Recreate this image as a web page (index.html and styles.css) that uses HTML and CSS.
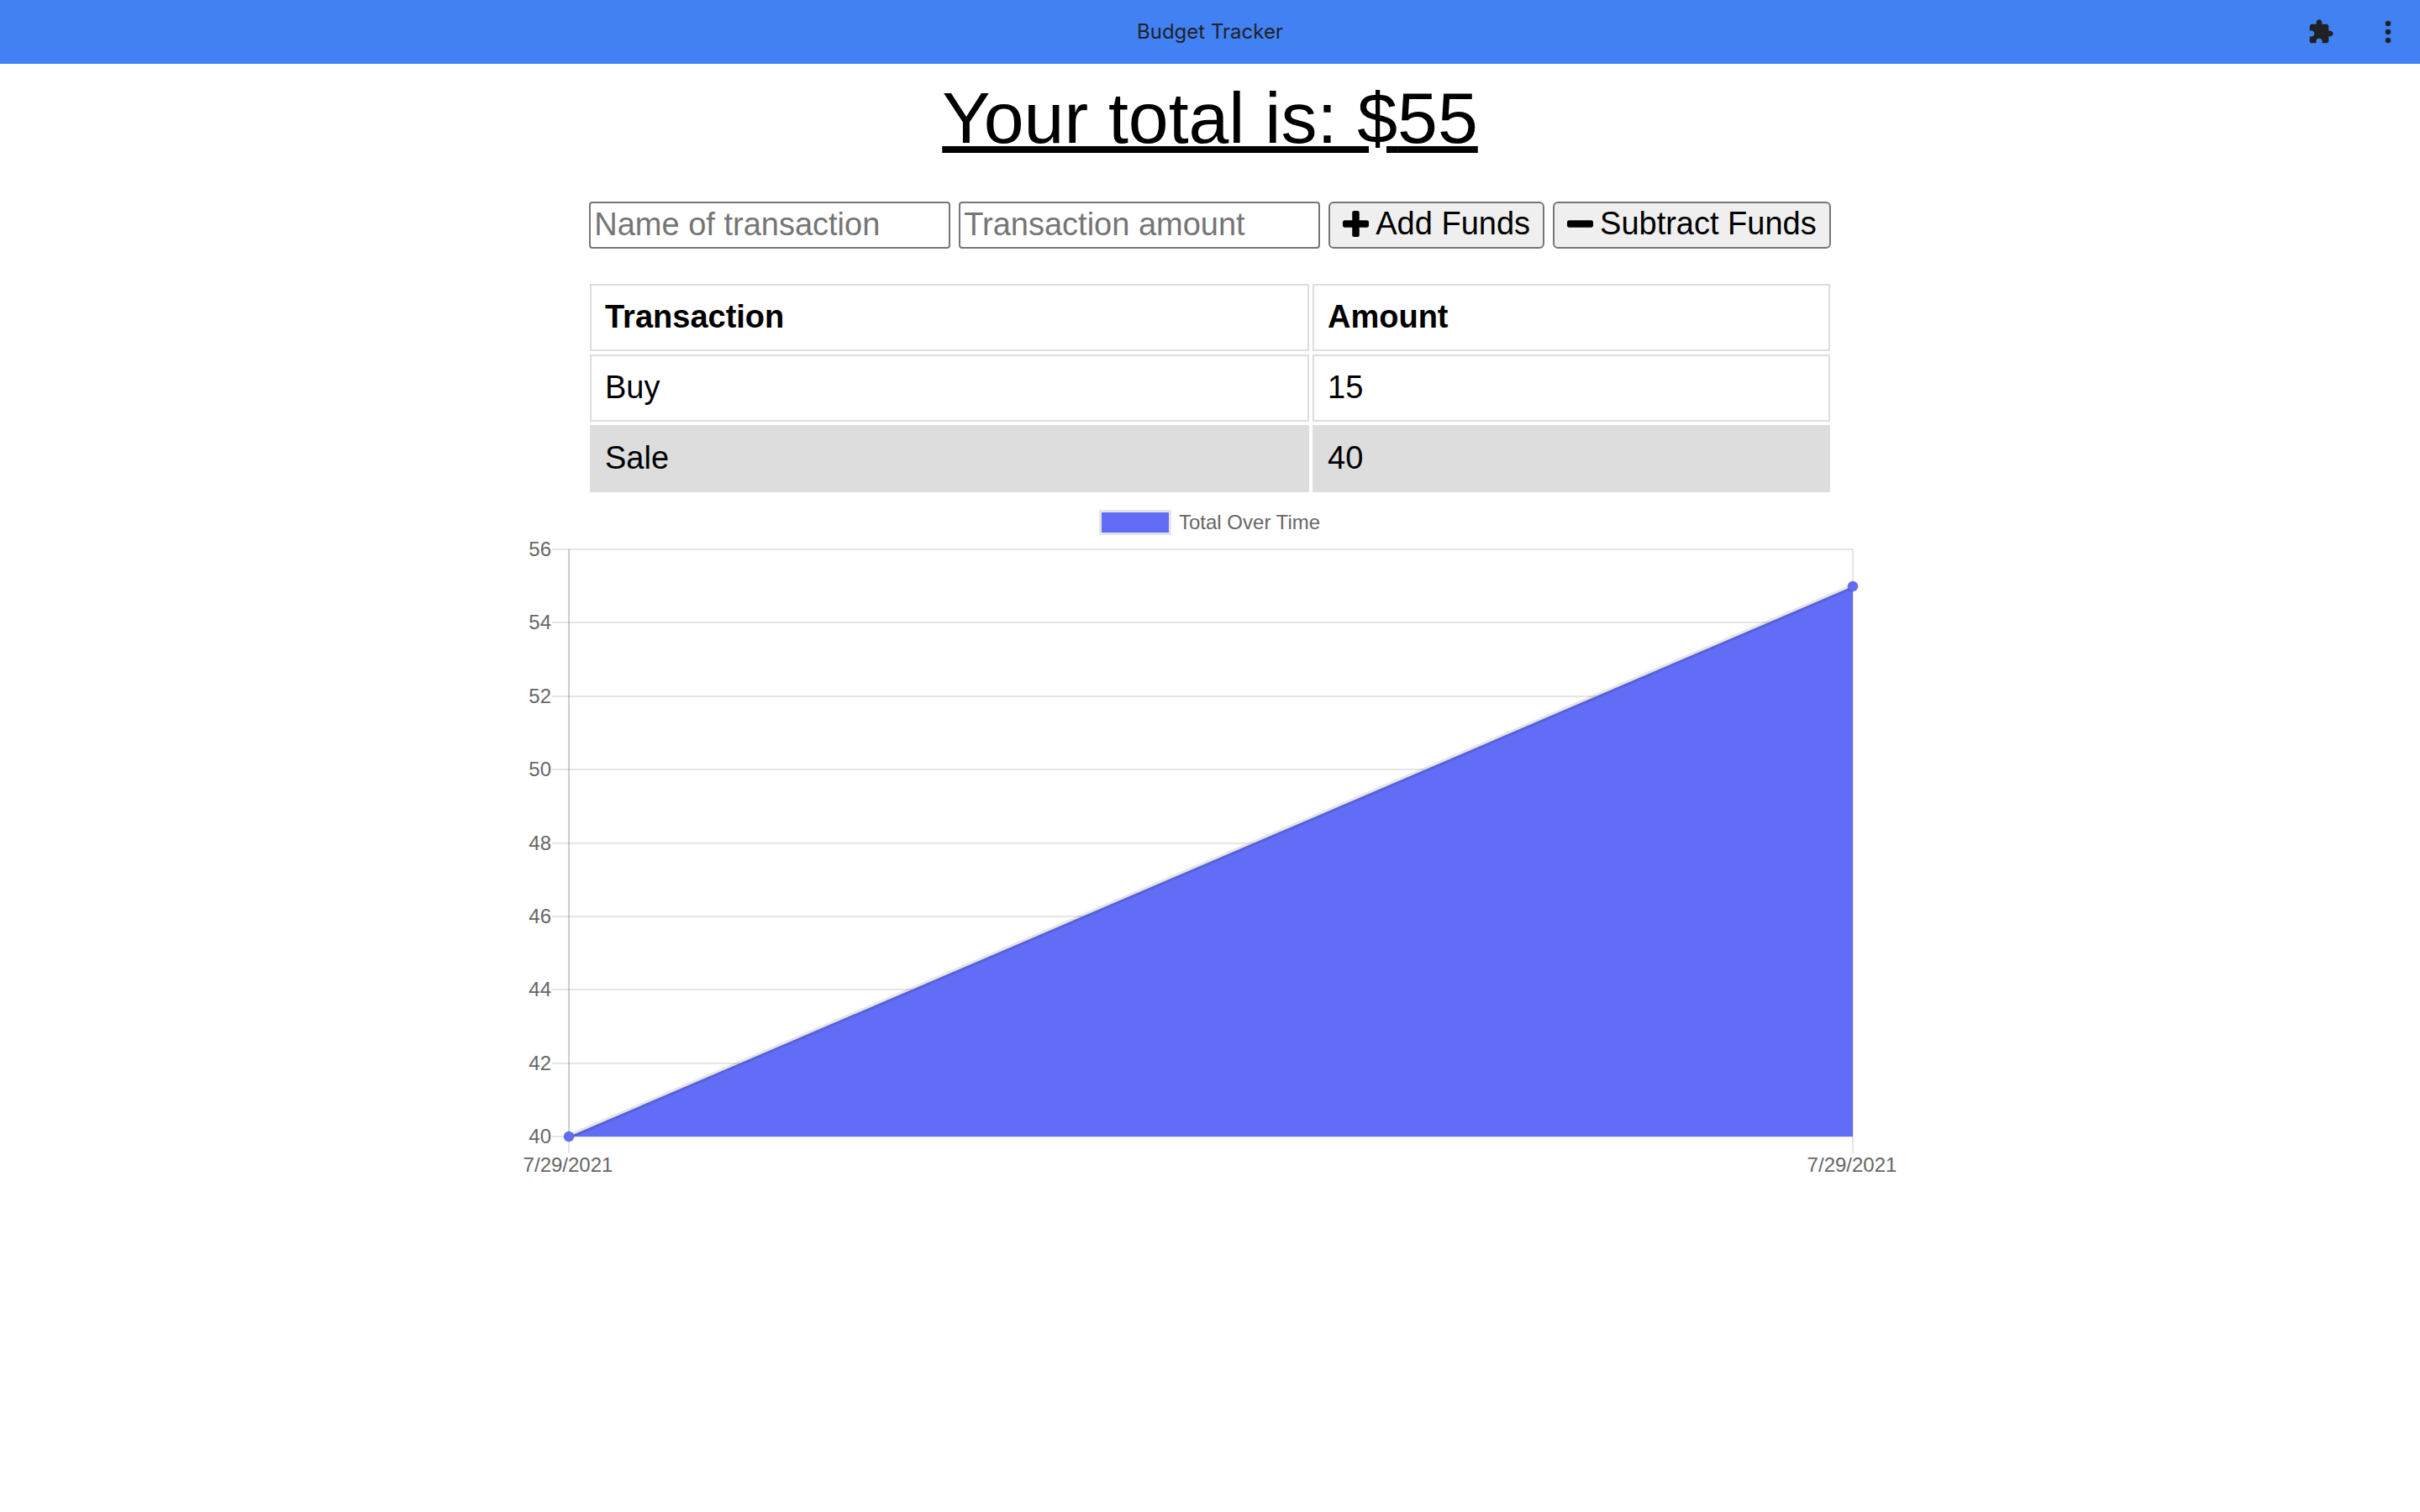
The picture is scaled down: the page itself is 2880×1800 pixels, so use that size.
FILE: index.html
```html
<!DOCTYPE html>
<html lang="en">
<head>
<meta charset="utf-8">
<title>Budget Tracker</title>
<link rel="stylesheet" href="styles.css">
</head>
<body>
<header class="titlebar">
  <div class="titlebar-name">Budget Tracker</div>
  <div class="titlebar-actions">
    <button class="icon-button" type="button" aria-label="Extensions">
      <svg class="icon-extensions" viewBox="0 0 24 24"><path d="M20.5 11H19V7c0-1.100-.9-2-2-2h-4V3.500C13 2.120 11.880 1 10.500 1S8 2.120 8 3.500V5H4c-1.100 0-1.990.9-1.990 2v3.800H3.500c1.490 0 2.700 1.210 2.700 2.700s-1.210 2.700-2.700 2.700H2V20c0 1.100.9 2 2 2h3.800v-1.500c0-1.490 1.210-2.700 2.700-2.700s2.700 1.210 2.700 2.700V22H17c1.100 0 2-.9 2-2v-4h1.500c1.380 0 2.500-1.120 2.500-2.500S21.880 11 20.500 11z"/></svg>
    </button>
    <button class="icon-button" type="button" aria-label="More options">
      <svg class="icon-more" viewBox="0 0 24 24"><circle cx="12" cy="6" r="2"/><circle cx="12" cy="12" r="2"/><circle cx="12" cy="18" r="2"/></svg>
    </button>
  </div>
</header>
<main class="wrapper">
  <h1 class="total">Your total is: $<span id="total">55</span></h1>
  <form class="form">
    <input class="field" type="text" id="t-name" aria-label="Name of transaction" placeholder="Name of transaction">
    <input class="field" type="text" inputmode="numeric" id="t-amount" aria-label="Transaction amount" placeholder="Transaction amount">
    <button class="fund-button" type="button" id="add-btn">
      <svg class="fund-icon" viewBox="192 128 1408 1408"><path d="M1600 736v192q0 40-28 68t-68 28h-416v416q0 40-28 68t-68 28h-192q-40 0-68-28t-28-68v-416h-416q-40 0-68-28t-28-68v-192q0-40 28-68t68-28h416v-416q0-40 28-68t68-28h192q40 0 68 28t28 68v416h416q40 0 68 28t28 68z"/></svg>
      Add Funds
    </button>
    <button class="fund-button" type="button" id="sub-btn">
      <svg class="fund-icon" viewBox="192 128 1408 1408"><path d="M1600 736v192q0 40-28 68t-68 28h-1216q-40 0-68-28t-28-68v-192q0-40 28-68t68-28h1216q40 0 68 28t28 68z"/></svg>
      Subtract Funds
    </button>
  </form>
  <table class="transactions">
    <thead>
      <tr><th class="col-name" scope="col">Transaction</th><th scope="col">Amount</th></tr>
    </thead>
    <tbody>
      <tr><td>Buy</td><td>15</td></tr>
      <tr><td>Sale</td><td>40</td></tr>
    </tbody>
  </table>
  <svg class="chart" viewBox="0 0 1640 820" role="img" aria-label="Total Over Time">
    <defs><clipPath id="area"><rect x="57" y="64" width="1528" height="702"/></clipPath></defs>
    <rect class="legend-border" x="688" y="17" width="86" height="30"/>
    <rect class="series" x="691" y="20" width="80" height="24"/>
    <text class="label" x="783" y="40">Total Over Time</text>
    <g class="grid">
      <path d="M37 64H1585M37 151H1585M37 239H1585M37 326H1585M37 414H1585M37 501H1585M37 588H1585M37 676H1585M37 763H1585"/>
      <path d="M57 64V783"/>
      <path d="M57 64V763"/>
      <path d="M1585 64V783"/>
    </g>
    <g class="label label-end">
      <text x="36" y="72">56</text>
      <text x="36" y="159">54</text>
      <text x="36" y="247">52</text>
      <text x="36" y="334">50</text>
      <text x="36" y="422">48</text>
      <text x="36" y="509">46</text>
      <text x="36" y="596">44</text>
      <text x="36" y="684">42</text>
      <text x="36" y="771">40</text>
    </g>
    <g class="label label-middle">
      <text x="56" y="805">7/29/2021</text>
      <text x="1584" y="805">7/29/2021</text>
    </g>
    <g clip-path="url(#area)">
      <path class="series" d="M57 763L1585 108V763z"/>
      <path class="series-line" d="M57 763L1585 108"/>
    </g>
    <circle class="point" cx="57" cy="763" r="6"/>
    <circle class="point" cx="1585" cy="108" r="6"/>
  </svg>
</main>
</body>
</html>
```
FILE: styles.css
```css
* {
  box-sizing: border-box;
}

body {
  margin: 0;
  background: #fff;
  color: #000;
  font-family: "Liberation Sans", Arial, sans-serif;
  font-size: 38px;
  line-height: 44px;
}

.titlebar {
  display: grid;
  grid-template-columns: 1fr auto 1fr;
  align-items: center;
  height: 76px;
  padding: 0 18px;
  background: #4281f4;
  color: #202124;
}

.titlebar-name {
  grid-column: 2;
  font-family: Inter, Roboto, sans-serif;
  font-size: 24px;
  line-height: 32px;
}

.titlebar-actions {
  display: flex;
  justify-content: flex-end;
  align-items: center;
  gap: 44px;
}

.icon-button {
  display: flex;
  padding: 0;
  border: 0;
  background: none;
  color: inherit;
}

.icon-button svg,
.fund-icon {
  fill: currentColor;
}

.icon-extensions {
  width: 32px;
  height: 32px;
}

.icon-more {
  width: 40px;
  height: 40px;
}

.wrapper {
  display: flex;
  flex-direction: column;
  align-items: center;
  max-width: 1640px;
  margin: 0 auto;
}

.total {
  margin: 14px 0 50px;
  font-size: 86px;
  font-weight: 400;
  line-height: 100px;
  text-decoration: underline;
  text-decoration-thickness: 8px;
  text-underline-offset: 4px;
}

.form {
  display: flex;
  flex-wrap: wrap;
  justify-content: center;
  gap: 10px;
}

.field {
  width: 430px;
  height: 56px;
  padding: 2px 4px 4px;
  border: 2px solid #767676;
  border-radius: 4px;
  background: #fff;
  font: inherit;
}

.field::placeholder {
  color: #757575;
  opacity: 1;
}

.fund-button {
  display: flex;
  align-items: center;
  gap: 8px;
  height: 56px;
  padding: 0 15px 4px;
  border: 2px solid #767676;
  border-radius: 6px;
  background: #efefef;
  color: #000;
  font: inherit;
}

.fund-icon {
  width: 31px;
  height: 31px;
}

.transactions {
  width: 1484px;
  max-width: 100%;
  margin-top: 38px;
  border-collapse: separate;
  border-spacing: 4px;
  text-align: left;
}

.transactions th,
.transactions td {
  padding: 15px 16px 17px;
  border: 2px solid #ddd;
}

.transactions .col-name {
  width: 856px;
}

.transactions tbody tr:nth-child(even) {
  background: #ddd;
}

.chart {
  display: block;
  width: 100%;
}

.legend-border {
  fill: #e5e5e5;
}

.series {
  fill: #616df6;
}

.series-line {
  stroke: #000;
  stroke-opacity: 0.1;
  stroke-width: 6;
}

.grid {
  fill: none;
  stroke: #000;
  stroke-opacity: 0.1;
  stroke-width: 2;
}

.point {
  fill: #616df6;
  stroke: #000;
  stroke-opacity: 0.1;
  stroke-width: 2;
}

.label {
  fill: #666;
  font-size: 24px;
}

.label-end {
  text-anchor: end;
}

.label-middle {
  text-anchor: middle;
}
```
